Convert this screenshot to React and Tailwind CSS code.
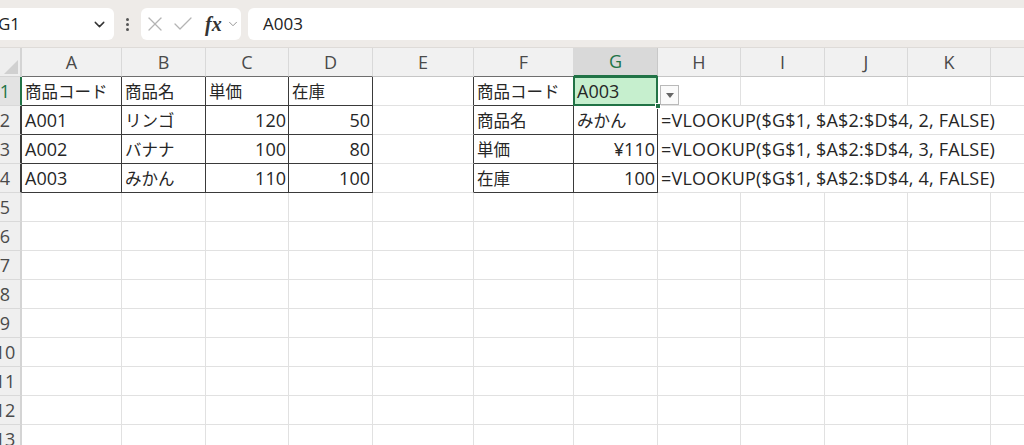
import { ChevronDown, X, Check } from 'lucide-react';

const COLS = [
  { key: 'A', w: 'w-[100px]' },
  { key: 'B', w: 'w-[84px]' },
  { key: 'C', w: 'w-[83px]' },
  { key: 'D', w: 'w-[84px]' },
  { key: 'E', w: 'w-[101px]' },
  { key: 'F', w: 'w-[100px]' },
  { key: 'G', w: 'w-[84px]' },
  { key: 'H', w: 'w-[83px]' },
  { key: 'I', w: 'w-[84px]' },
  { key: 'J', w: 'w-[83px]' },
  { key: 'K', w: 'w-[83px]' },
  { key: 'L', w: 'w-[83px]' },
];

// cell values: [text, align]
const DATA = {
  1: { A: ['商品コード'], B: ['商品名'], C: ['単価'], D: ['在庫'], F: ['商品コード'], G: ['A003'] },
  2: { A: ['A001'], B: ['リンゴ'], C: ['120', 'r'], D: ['50', 'r'], F: ['商品名'], G: ['みかん'], H: ['=VLOOKUP($G$1, $A$2:$D$4, 2, FALSE)'] },
  3: { A: ['A002'], B: ['バナナ'], C: ['100', 'r'], D: ['80', 'r'], F: ['単価'], G: ['¥110', 'r'], H: ['=VLOOKUP($G$1, $A$2:$D$4, 3, FALSE)'] },
  4: { A: ['A003'], B: ['みかん'], C: ['110', 'r'], D: ['100', 'r'], F: ['在庫'], G: ['100', 'r'], H: ['=VLOOKUP($G$1, $A$2:$D$4, 4, FALSE)'] },
};

const ROWS = [1, 2, 3, 4, 5, 6, 7, 8, 9, 10, 11, 12, 13];

const inTable = (r, c) => {
  if (r < 1 || r > 4) return false;
  return ['A', 'B', 'C', 'D', 'F', 'G'].includes(c);
};

const nextCol = (c) => {
  const i = COLS.findIndex((x) => x.key === c);
  return COLS[i + 1]?.key;
};

// Japanese text gets the CJK face at a smaller size, latin gets Open Sans
const isJa = (t) => /[\u3040-\u30ff\u4e00-\u9fff]/.test(t || '');
const textCls = (t) =>
  isJa(t) ? "font-['Noto_Sans_CJK_JP',sans-serif] text-[16.5px]" : 'text-[18px]';

const FONT = "font-['Open_Sans','Noto_Sans_CJK_JP',sans-serif]";

function Toolbar() {
  return (
    <div className="h-[48px] bg-[#eeebe8] flex items-start pt-[8px] border-b border-[#dedbd8]">
      <div className="-ml-[6px] w-[120px] h-[32px] bg-white rounded-md flex items-center justify-between pl-[4px] pr-[6px]">
        <span className="text-[17px] text-[#222]">G1</span>
        <ChevronDown size={17} strokeWidth={2} className="text-[#333]" />
      </div>
      <div className="w-[27px] h-[32px] flex flex-col items-center justify-center gap-[2px]">
        <span className="w-[3px] h-[3px] rounded-full bg-[#555]" />
        <span className="w-[3px] h-[3px] rounded-full bg-[#555]" />
        <span className="w-[3px] h-[3px] rounded-full bg-[#555]" />
      </div>
      <div className="w-[100px] h-[32px] bg-white rounded-md flex items-center pl-[2px]">
        <X size={24} strokeWidth={1.3} className="text-[#b4b4b4]" />
        <Check size={24} strokeWidth={1.3} className="ml-[4px] text-[#b4b4b4]" />
        <span className="ml-[10px] font-['Liberation_Serif',serif] italic font-bold text-[20px] text-[#333] leading-none">fx</span>
        <ChevronDown size={14} strokeWidth={1.5} className="ml-[4px] text-[#888]" />
      </div>
      <div className="ml-[7px] flex-1 h-[32px] bg-white rounded-l-md flex items-center pl-[15px]">
        <span className="text-[17px] text-[#222]">A003</span>
      </div>
    </div>
  );
}

function HeaderRow() {
  return (
    <div className="flex h-[29px] bg-[#f1f1f1]">
      <div className="w-[22px] shrink-0 relative border-r-2 border-b border-[#d4d4d4] bg-[#eeeeee]">
        <svg width="14" height="14" viewBox="0 0 14 14" className="absolute right-[2px] bottom-[2px]">
          <polygon points="14,0 14,14 0,14" fill="#d0d0d0" />
        </svg>
      </div>
      {COLS.map((c) => {
        const sel = c.key === 'G';
        const dark = inTable(1, c.key);
        return (
          <div
            key={c.key}
            className={`${c.w} shrink-0 flex items-center justify-center text-[18px] border-r ${
              sel ? 'bg-[#d9d9d9] text-[#217346] border-[#c8c8c8]' : 'text-[#4a4a4a] border-[#d9d9d9]'
            } ${sel ? 'border-b-2 border-b-[#217346]' : dark ? 'border-b border-b-[#6e6e6e]' : 'border-b border-b-[#c6c6c6]'}`}
          >
            {c.key}
          </div>
        );
      })}
    </div>
  );
}

function Cell({ r, c }) {
  const val = DATA[r]?.[c.key];
  const right = inTable(r, c.key) || inTable(r, nextCol(c.key));
  const bottom = inTable(r, c.key) || inTable(r + 1, c.key);
  const isSel = r === 1 && c.key === 'G';
  return (
    <div
      className={`${c.w} shrink-0 relative flex items-center text-[#262626] border-r border-b whitespace-nowrap ${textCls(
        val?.[0]
      )} ${right ? 'border-r-[#3a3a3a]' : 'border-r-[#e1e1e1]'} ${bottom ? 'border-b-[#3a3a3a]' : 'border-b-[#e1e1e1]'} ${
        isSel ? 'bg-[#c6efce]' : ''
      } ${val?.[1] === 'r' ? 'justify-end pr-[2px]' : 'pl-[3px]'}`}
    >
      {val?.[0]}
      {isSel && (
        <>
          <div className="absolute -left-px -top-px -right-px -bottom-px border-2 border-[#217346] pointer-events-none" />
          <div className="absolute -right-[4px] -bottom-[4px] w-[6px] h-[6px] bg-[#217346] border border-white z-10" />
          <div className="absolute left-[86px] top-[8px] w-[19px] h-[20px] bg-[#fafafa] border border-[#b9b9b9] flex items-center justify-center z-10">
            <svg width="8" height="5" viewBox="0 0 8 5">
              <polygon points="0,0 8,0 4,5" fill="#666" />
            </svg>
          </div>
        </>
      )}
    </div>
  );
}

function Row({ r }) {
  const formula = r >= 2 && r <= 4;
  const rowSel = r === 1;
  return (
    <div className="flex h-[29px]">
      <div
        className={`w-[22px] shrink-0 overflow-hidden flex items-center border-b border-[#d9d9d9] border-r-2 ${
          rowSel ? 'bg-[#e3e3e3] border-r-[#217346]' : r <= 4 ? 'bg-[#efefef] border-r-[#3a3a3a]' : 'bg-[#efefef] border-r-[#d4d4d4]'
        }`}
      >
        <span className={`-ml-[12px] w-[34px] shrink-0 text-center text-[18px] ${rowSel ? 'text-[#217346]' : 'text-[#4a4a4a]'}`}>
          {r}
        </span>
      </div>
      {COLS.map((c) => {
        if (formula && ['I', 'J', 'K', 'L'].includes(c.key)) return null;
        if (formula && c.key === 'H') {
          return (
            <div
              key={c.key}
              className="w-[416px] shrink-0 flex items-center pl-[3px] text-[18px] tracking-[0.2px] text-[#262626] whitespace-nowrap border-b border-[#e1e1e1]"
            >
              {DATA[r].H[0]}
            </div>
          );
        }
        return <Cell key={c.key} r={r} c={c} />;
      })}
    </div>
  );
}

export default function App() {
  return (
    <div className={`w-[1024px] h-[445px] overflow-hidden bg-white ${FONT}`}>
      <Toolbar />
      <div className="w-[1100px]">
        <HeaderRow />
        {ROWS.map((r) => (
          <Row key={r} r={r} />
        ))}
      </div>
    </div>
  );
}
